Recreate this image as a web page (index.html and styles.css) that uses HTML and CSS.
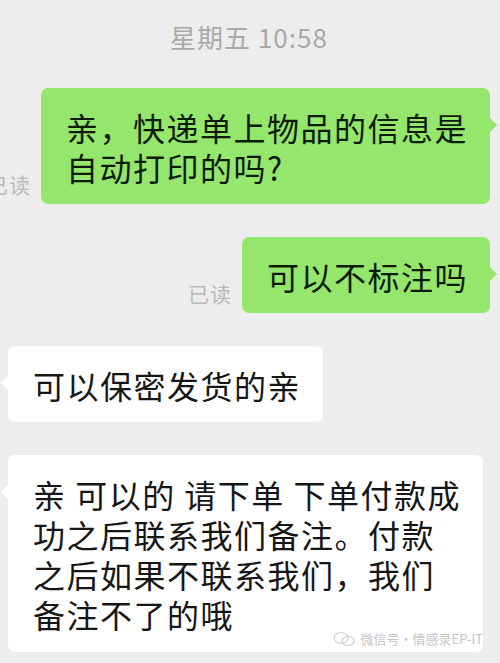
FILE: index.html
```html
<!DOCTYPE html>
<html lang="zh-CN">
<head>
    <meta charset="UTF-8">
    <meta name="viewport" content="width=device-width, initial-scale=1.0">
    <title>聊天记录</title>
<link rel="stylesheet" href="styles.css">
</head>
<body>
    <div class="chat">
        <div class="time">星期五 10:58</div>

        <div class="row me">
            <span class="read">已读</span>
            <div class="bubble green">亲，快递单上物品的信息是<br>自动打印的吗?</div>
        </div>

        <div class="row me">
            <span class="read">已读</span>
            <div class="bubble green">可以不标注吗</div>
        </div>

        <div class="row them">
            <div class="bubble white">可以保密发货的亲</div>
        </div>

        <div class="row them">
            <div class="bubble white last">亲 可以的 请下单 下单付款成<br>功之后联系我们备注。付款<br>之后如果不联系我们，我们<br>备注不了的哦
                <div class="mark">
                    <svg width="22" height="16" viewBox="0 0 22 16">
                        <ellipse cx="8" cy="7" rx="7" ry="5.5" fill="none" stroke="#cfcfcf" stroke-width="1.2"/>
                        <ellipse cx="15" cy="10" rx="6" ry="4.5" fill="none" stroke="#cfcfcf" stroke-width="1.2"/>
                    </svg>
                    <span>微信号·情感录EP-IT</span>
                </div>
            </div>
        </div>
    </div>
</body>
</html>
```

FILE: styles.css
```css
body {
    margin: 0;
    background: #ededed;
    font-family: "Noto Sans CJK SC", "Noto Sans", sans-serif;
    overflow: hidden;
}
.chat {
    padding: 21px 10px 0 8px;
}
.time {
    text-align: center;
    font-size: 26px;
    line-height: 32px;
    letter-spacing: 1px;
    color: #a9a9a9;
    margin-bottom: 35px;
}
.row {
    display: flex;
    align-items: flex-end;
    gap: 10px;
}
.row + .row {
    margin-top: 33px;
}
.me {
    justify-content: flex-end;
}
.them {
    justify-content: flex-start;
}
.read {
    flex-shrink: 0;
    font-size: 21px;
    color: #b9b9b9;
    margin-bottom: 5px;
    letter-spacing: 1px;
}
.bubble {
    position: relative;
    flex-shrink: 0;
    border-radius: 7px;
    font-size: 32px;
    line-height: 40px;
    letter-spacing: 1.5px;
    padding: 19px 22px 17px 25px;
}
.green {
    background: #95e66c;
    color: #0d1c08;
}
.white {
    background: #fff;
    color: #161616;
}
.green::after,
.white::after {
    content: "";
    position: absolute;
    top: 30px;
    border-top: 7px solid transparent;
    border-bottom: 7px solid transparent;
}
.green::after {
    right: -7px;
    border-left: 7px solid #95e66c;
}
.white::after {
    left: -7px;
    border-right: 7px solid #fff;
}
.last {
    padding-bottom: 18px;
}
.mark {
    position: absolute;
    right: 0;
    bottom: 4px;
    display: flex;
    align-items: center;
    gap: 6px;
    font-size: 13px;
    line-height: 18px;
    letter-spacing: 0;
    color: #c4c4c4;
}
```
